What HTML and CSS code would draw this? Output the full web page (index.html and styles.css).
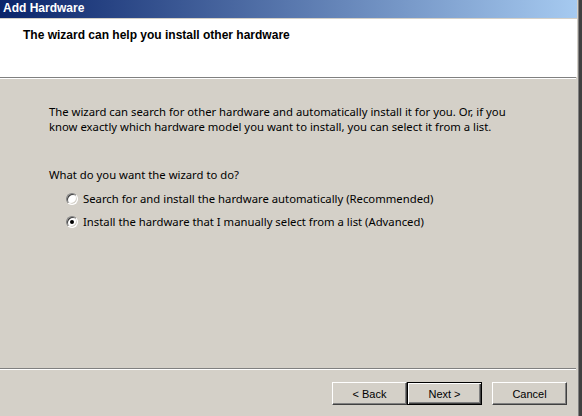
FILE: index.html
```html
<!DOCTYPE html>
<html>
<head>
<meta charset="utf-8">
<link rel="stylesheet" href="styles.css">
</head>
<body>
<div class="screen">
  <div class="window">
    <div class="titlebar">Add Hardware</div>
    <div class="header">
      <div class="header-title">The wizard can help you install other hardware</div>
    </div>
    <div class="sep"></div>
    <div class="content">
      <p class="intro">The wizard can search for other hardware and automatically install it for you. Or, if you know exactly which hardware model you want to install, you can select it from a list.</p>
      <p class="question">What do you want the wizard to do?</p>
      <div class="options">
        <label class="option"><span class="radio"></span><span>Search for and install the hardware automatically (Recommended)</span></label>
        <label class="option"><span class="radio checked"></span><span>Install the hardware that I manually select from a list (Advanced)</span></label>
      </div>
    </div>
    <div class="sep"></div>
    <div class="footer">
      <div class="btn-pair">
        <button class="btn">&lt; Back</button>
        <button class="btn default">Next &gt;</button>
      </div>
      <button class="btn">Cancel</button>
    </div>
  </div>
  <div class="frame"></div>
</div>
</body>
</html>
```
FILE: styles.css
```css
html, body {
  margin: 0;
  padding: 0;
  background: #d4d0c8;
}
.screen {
  display: flex;
  width: 582px;
  height: 416px;
  overflow: hidden;
}
.window {
  width: 577px;
  display: flex;
  flex-direction: column;
  background: #d4d0c8;
}
.frame {
  width: 5px;
  background: linear-gradient(to right, #d4d0c8 0 1px, #808080 1px 2px, #404040 2px 5px);
}
.titlebar {
  height: 19px;
  box-sizing: border-box;
  padding-left: 3px;
  background: linear-gradient(to right, #0a246a, #a6caf0);
  color: #fff;
  font: bold 12px "Liberation Sans", Arial, sans-serif;
  line-height: 17px;
  border-bottom: 1px solid #d4d0c8;
}
.header {
  height: 58px;
  background: #fff;
  padding: 0 0 0 23px;
  box-sizing: border-box;
}
.header-title {
  font: bold 12px "Liberation Sans", Arial, sans-serif;
  color: #000;
  padding-top: 9px;
  line-height: 15px;
}
.sep {
  height: 1px;
  border-top: 1px solid #808080;
  background: #fff;
  margin-right: 1px;
}
.content {
  height: 289px;
  padding: 0 0 0 49px;
  box-sizing: border-box;
  font: 11.3px "Noto Sans", sans-serif;
  color: #000;
}
.intro {
  margin: 25px 0 0 0;
  line-height: 15px;
  width: 470px;
}
.question {
  margin: 33px 0 0 0;
  line-height: 15px;
}
.options {
  display: flex;
  flex-direction: column;
  gap: 8px;
  margin-top: 9px;
  padding-left: 17px;
}
.option {
  display: flex;
  align-items: center;
  gap: 5px;
  line-height: 15px;
}
.radio {
  width: 12px;
  height: 12px;
  box-sizing: border-box;
  border-radius: 50%;
  background: #fff;
  border: 1px solid;
  border-color: #808080 #fff #fff #808080;
  box-shadow: inset 1px 1px 0 #404040, inset -1px -1px 0 #d4d0c8;
  position: relative;
  flex: none;
}
.radio.checked::after {
  content: "";
  position: absolute;
  left: 3px;
  top: 3px;
  width: 4px;
  height: 4px;
  border-radius: 50%;
  background: #000;
}
.footer {
  flex: 1;
  display: flex;
  align-items: flex-start;
  justify-content: flex-end;
  gap: 10px;
  padding: 12px 10px 0 0;
}
.btn-pair {
  display: flex;
}
.btn {
  width: 75px;
  height: 23px;
  box-sizing: border-box;
  font: 11px "Liberation Sans", Arial, sans-serif;
  color: #000;
  background: #d4d0c8;
  border: 1px solid;
  border-color: #fff #404040 #404040 #fff;
  box-shadow: inset -1px -1px 0 #808080, inset 1px 1px 0 #d4d0c8;
  padding: 0;
  margin: 0;
}
.btn.default {
  border: 1px solid #000;
  box-shadow: inset 1px 1px 0 #fff, inset -1px -1px 0 #404040, inset -2px -2px 0 #808080;
}
```
